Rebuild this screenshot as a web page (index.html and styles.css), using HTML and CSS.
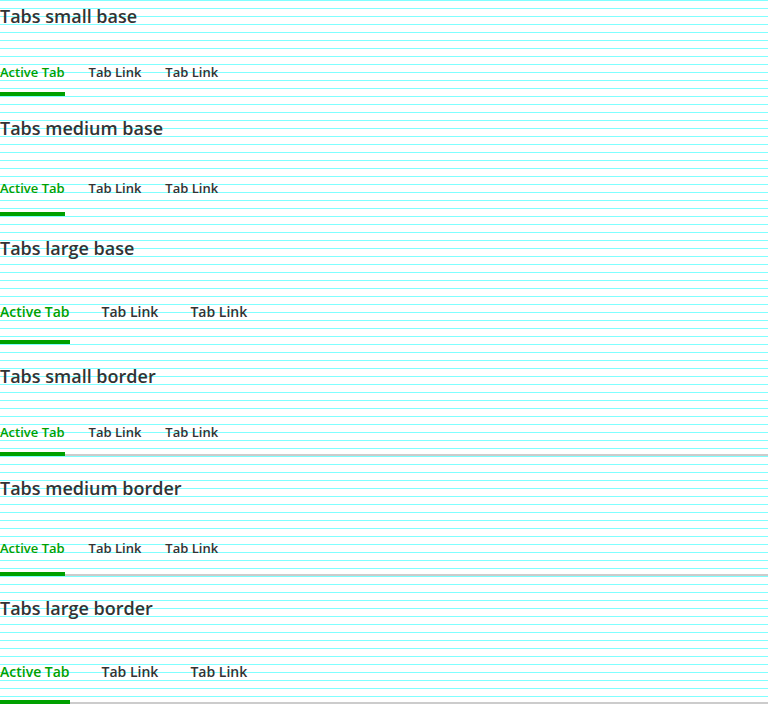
FILE: index.html
```html
<!DOCTYPE html>
<html>
<head>
<meta charset="utf-8">
<link rel="stylesheet" href="styles.css">
</head>
<body>
<section class="demo">
  <h2 class="title">Tabs small base</h2>
  <nav class="tabs tabs-sm">
    <a class="tab active">Active Tab</a>
    <a class="tab">Tab Link</a>
    <a class="tab">Tab Link</a>
  </nav>
</section>
<section class="demo">
  <h2 class="title">Tabs medium base</h2>
  <nav class="tabs tabs-md">
    <a class="tab active">Active Tab</a>
    <a class="tab">Tab Link</a>
    <a class="tab">Tab Link</a>
  </nav>
</section>
<section class="demo">
  <h2 class="title">Tabs large base</h2>
  <nav class="tabs tabs-lg">
    <a class="tab active">Active Tab</a>
    <a class="tab">Tab Link</a>
    <a class="tab">Tab Link</a>
  </nav>
</section>
<section class="demo">
  <h2 class="title">Tabs small border</h2>
  <nav class="tabs tabs-sm tabs-border">
    <a class="tab active">Active Tab</a>
    <a class="tab">Tab Link</a>
    <a class="tab">Tab Link</a>
  </nav>
</section>
<section class="demo">
  <h2 class="title">Tabs medium border</h2>
  <nav class="tabs tabs-md tabs-border">
    <a class="tab active">Active Tab</a>
    <a class="tab">Tab Link</a>
    <a class="tab">Tab Link</a>
  </nav>
</section>
<section class="demo">
  <h2 class="title">Tabs large border</h2>
  <nav class="tabs tabs-lg tabs-border">
    <a class="tab active">Active Tab</a>
    <a class="tab">Tab Link</a>
    <a class="tab">Tab Link</a>
  </nav>
</section>
</body>
</html>
```

FILE: styles.css
```css
html, body {
  margin: 0;
  padding: 0;
}
body {
  font-family: "Open Sans", "Noto Sans", sans-serif;
  color: #333;
  background-color: #fff;
  background-image: repeating-linear-gradient(to bottom, #80ffff 0, #80ffff 1px, transparent 1px, transparent 8px);
  min-height: 704px;
}
.demo {
  margin: 0 0 16px 0;
}
.title {
  margin: 0;
  font-size: 18px;
  font-weight: 600;
  line-height: 32px;
  color: #333;
}
.tabs {
  display: flex;
  margin-top: 32px;
  gap: 24px;
}
.tab {
  display: block;
  font-size: 13px;
  font-weight: 600;
  line-height: 16px;
  padding-bottom: 12px;
  border-bottom: 4px solid transparent;
  color: #333;
}
.tab.active {
  color: #00a000;
  border-bottom-color: #00a000;
}
.tabs-md .tab {
  line-height: 24px;
}
.tabs-lg {
  gap: 32px;
}
.tabs-lg .tab {
  font-size: 14px;
  line-height: 32px;
}
.tabs-border {
  box-shadow: inset 0 -2px 0 #cccccc;
}
```
